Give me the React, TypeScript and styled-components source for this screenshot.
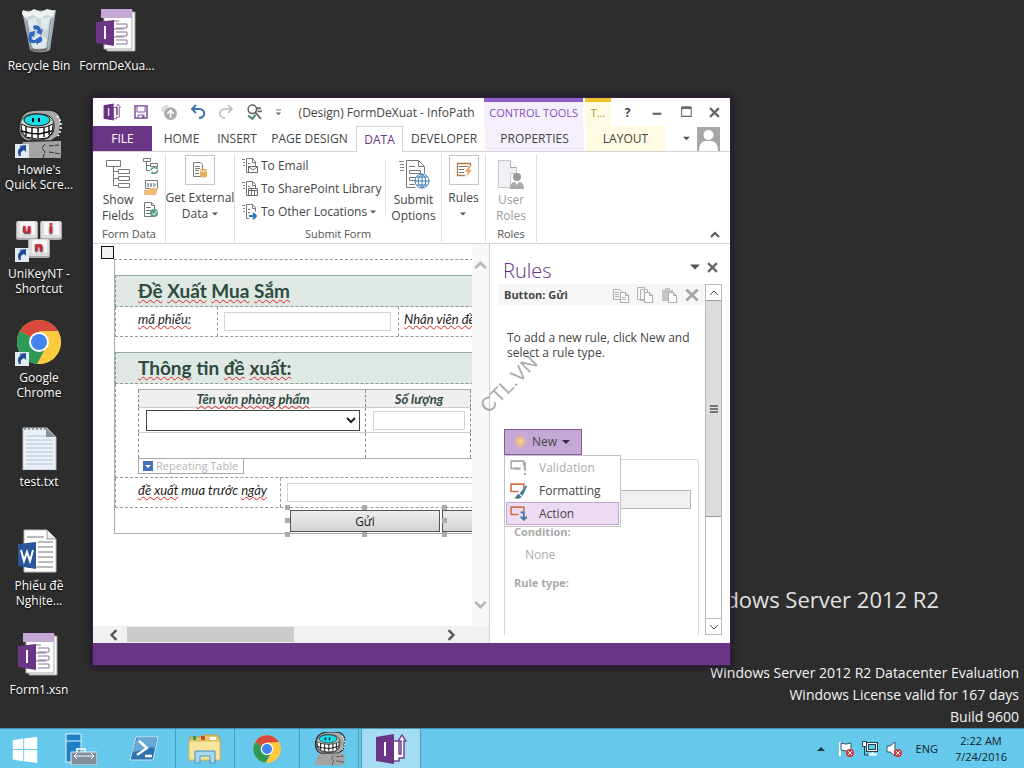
import type { ReactNode } from 'react';
import styled, { createGlobalStyle, css } from 'styled-components';

const purple = '#6a3585';

const GlobalStyle = createGlobalStyle`
  * {
    box-sizing: border-box;
  }
  body {
    margin: 0;
    background-color: #2d2d2d;
    font-family: 'Open Sans', 'Noto Sans', sans-serif;
    font-size: 12px;
    color: #444;
  }
  button, input, select {
    font: inherit;
    color: inherit;
    margin: 0;
    padding: 0;
    border-radius: 0;
  }
  button {
    background: none;
    border: none;
  }
  h1, h2, p {
    margin: 0;
    font-weight: normal;
  }
  svg {
    display: block;
    flex: none;
  }
`;

const Screen = styled.div`
  display: flex;
  flex-direction: column;
  height: 100vh;
  overflow: hidden;
`;

const Desktop = styled.main`
  position: relative;
  flex: 1;
  min-height: 0;
  display: flex;
  justify-content: space-between;
`;

const Shortcuts = styled.div`
  display: grid;
  grid-auto-flow: column;
  grid-template-rows: repeat(7, 104px);
  grid-auto-columns: 78px;
  padding-top: 6px;
`;

const ShortcutButton = styled.button`
  display: flex;
  flex-direction: column;
  align-items: center;
  justify-content: flex-start;
  color: #fff;
  font-size: 12px;
  line-height: 15px;
  text-shadow: 0 1px 2px #000;
  span {
    margin-top: 4px;
    white-space: pre;
  }
`;

const SystemInfo = styled.div`
  align-self: flex-end;
  padding-right: 5px;
  color: #f4f4f4;
  font-size: 14px;
  line-height: 22px;
  text-align: right;
  white-space: nowrap;
`;

const Brand = styled.p`
  padding-right: 80px;
  margin-bottom: 48px;
  font-size: 22px;
  line-height: 30px;
  color: #e2e2e2;
`;

/* ---------- window frame ---------- */

const Window = styled.section`
  position: absolute;
  inset: 97px 293px 62px 92px;
  display: flex;
  flex-direction: column;
  background-color: #fff;
  border: 1px solid #35203f;
  box-shadow: 0 0 6px 2px rgba(30, 12, 40, 0.6);
`;

const TitleBar = styled.header`
  display: flex;
  flex: none;
  height: 28px;
`;

const QuickAccess = styled.div`
  display: flex;
  align-items: center;
  gap: 12px;
  width: 206px;
  padding-left: 10px;
`;

const IconButton = styled.button`
  display: flex;
  align-items: center;
  justify-content: center;
`;

const Title = styled.h1`
  width: 186px;
  font-size: 12px;
  line-height: 30px;
  white-space: nowrap;
`;

const contextual = {
  control: { bar: '#8f5fc8', back: '#f4effb', text: '#8650bd' },
  table: { bar: '#eec32f', back: '#fffbe2', text: '#a98f3c' },
};

const ToolsLabel = styled.div<{ $kind: 'control' | 'table'; $width: number }>`
  width: ${props => props.$width}px;
  margin-right: 2px;
  border-top: 4px solid ${props => contextual[props.$kind].bar};
  background-color: ${props => contextual[props.$kind].back};
  color: ${props => contextual[props.$kind].text};
  font-size: 11px;
  line-height: 22px;
  text-align: center;
  white-space: nowrap;
`;

const WindowButtons = styled.div`
  flex: 1;
  display: flex;
  align-items: center;
  justify-content: flex-end;
  padding-right: 1px;
  > button {
    width: 29px;
  }
`;

const TabRow = styled.nav`
  display: flex;
  flex: none;
  height: 26px;
  border-bottom: 1px solid #d4d4d4;
`;

const Tab = styled.button<{ $width: number; $look?: 'file' | 'active' | 'control' | 'table' }>`
  width: ${props => props.$width}px;
  height: 25px;
  font-size: 12px;
  line-height: 24px;
  white-space: nowrap;
  ${props => props.$look === 'file' && css`
    background-color: ${purple};
    color: #fff;
  `}
  ${props => props.$look === 'active' && css`
    height: 26px;
    border: 1px solid #d4d4d4;
    border-bottom: none;
    background-color: #fff;
    color: ${purple};
  `}
  ${props => (props.$look === 'control' || props.$look === 'table') && css`
    margin-right: 2px;
    background-color: ${contextual[props.$look].back};
  `}
`;

const Account = styled.div`
  flex: 1;
  display: flex;
  align-items: center;
  justify-content: flex-end;
  gap: 7px;
  padding-right: 10px;
`;

/* ---------- ribbon ---------- */

const Ribbon = styled.div`
  display: flex;
  flex: none;
  height: 92px;
  padding-top: 2px;
  border-bottom: 1px solid #d4d4d4;
`;

const RibbonGroup = styled.div<{ $width: number }>`
  display: flex;
  flex-direction: column;
  width: ${props => props.$width}px;
  height: 88px;
  border-right: 1px solid #e1e1e1;
`;

const GroupBody = styled.div`
  display: flex;
  justify-content: center;
  height: 73px;
`;

const GroupName = styled.div`
  font-size: 11px;
  line-height: 16px;
  text-align: center;
  color: #555;
`;

const BigButton = styled.button<{ $framed?: boolean }>`
  display: flex;
  flex: 1;
  min-width: 0;
  flex-direction: column;
  align-items: center;
  padding-top: ${props => props.$framed ? 0 : 5}px;
  line-height: 16px;
  font-size: 12px;
  white-space: pre;
  &:disabled {
    color: #9d9d9d;
  }
  > span {
    margin-top: ${props => props.$framed ? 5 : 3}px;
    display: flex;
    flex-direction: column;
    align-items: center;
  }
`;

const IconFrame = styled.span`
  display: flex;
  align-items: center;
  justify-content: center;
  width: 30px;
  height: 30px;
  border: 1px solid #c6c6c6;
  && {
    margin-top: 1px;
    flex-direction: row;
  }
`;

const CaretLine = styled.span`
  display: flex;
  align-items: center;
  gap: 1px;
  min-height: 16px;
`;

const SmallColumn = styled.div`
  display: flex;
  flex-direction: column;
  gap: 6px;
  padding: 4px 6px 0 0;
`;

const SubmitList = styled.div`
  display: flex;
  flex: none;
  flex-direction: column;
  width: 150px;
  height: 69px;
  padding-left: 7px;
`;

const SubmitItem = styled.button`
  display: flex;
  align-items: center;
  gap: 3px;
  height: 23px;
  white-space: nowrap;
`;

const InnerRule = styled.div`
  width: 1px;
  height: 56px;
  margin-top: 6px;
  background-color: #e1e1e1;
`;

const Collapse = styled.button`
  margin: auto 10px 3px auto;
`;

/* ---------- form canvas ---------- */

const Work = styled.div`
  flex: 1;
  min-height: 0;
  display: flex;
`;

const CanvasPane = styled.div`
  flex: 1;
  min-width: 0;
  display: grid;
  grid-template-columns: minmax(0, 1fr) 17px;
  grid-template-rows: minmax(0, 1fr) 17px;
  border-right: 1px solid #d0d0d0;
`;

const Canvas = styled.div`
  overflow: hidden;
  padding: 2px 0 0 8px;
`;

const SelectAll = styled.button`
  display: block;
  width: 13px;
  height: 13px;
  border: 1px solid #111;
  background-color: #f0f0f0;
`;

const FormPage = styled.div`
  width: 520px;
  margin-left: 13px;
  border-left: 1px solid #aaa;
  border-top: 1px dashed #999;
  border-bottom: 1px solid #aaa;
  font-family: Lato, 'Open Sans', sans-serif;
  color: #222;
`;

const Band = styled.h2`
  margin-top: 15px;
  height: 32px;
  padding-left: 22px;
  border: 1px dashed #8a9a92;
  border-top: 1px solid #93aaa0;
  background-color: #dfe8e3;
  color: #2e4a40;
  font-size: 19px;
  font-weight: bold;
  line-height: 30px;
  white-space: nowrap;
`;

const Misspelt = styled.span`
  text-decoration: underline wavy #d22 1px;
  text-decoration-skip-ink: none;
  text-underline-offset: 1px;
`;

const FieldRow = styled.div<{ $label: number }>`
  display: grid;
  grid-template-columns: ${props => props.$label}px 181px 1fr;
  height: 30px;
  border-left: 1px dashed #999;
  border-bottom: 1px dashed #999;
  font-size: 13px;
  font-style: italic;
  line-height: 15px;
  white-space: nowrap;
`;

const FieldCell = styled.div<{ $pad: number; $span?: boolean }>`
  padding: 5px 7px 0 ${props => props.$pad}px;
  border-right: 1px dashed #999;
  grid-column: ${props => props.$span ? 'span 2' : 'auto'};
`;

const TextField = styled.input`
  display: block;
  width: 100%;
  height: 19px;
  border: 1px solid #d4d4d4;
  background-color: #fff;
`;

const Repeating = styled.div`
  height: 94px;
  padding: 5px 0 0 22px;
  border-left: 1px dashed #999;
  border-bottom: 1px dashed #999;
`;

const RepeatingTable = styled.table`
  width: 333px;
  border-collapse: collapse;
  border-top: 1px solid #aaa;
  table-layout: fixed;
  th, td {
    padding: 0 5px 0 7px;
    border-left: 1px dashed #888;
    border-right: 1px dashed #888;
  }
  th {
    height: 18px;
    background-color: #efefef;
    color: #2e4a40;
    font-size: 13px;
    font-style: italic;
    line-height: 16px;
  }
  td {
    height: 25px;
    border-top: 1px solid #ccc;
  }
`;

const ItemSelect = styled.select`
  display: block;
  width: 100%;
  height: 21px;
  border: 1px solid #444;
  background-color: #fff;
`;

const TableTag = styled.div`
  border-top: 1px solid #aaa;
  span {
    display: flex;
    align-items: center;
    gap: 3px;
    width: 106px;
    height: 15px;
    padding-left: 4px;
    border: 1px solid #aaa;
    border-top: none;
    color: #b4b4b4;
    font-family: 'Open Sans', sans-serif;
    font-size: 11px;
    white-space: nowrap;
  }
`;

const ButtonRow = styled.div`
  display: flex;
  gap: 2px;
  padding: 2px 0 1px 175px;
`;

const FormButton = styled.button`
  width: 150px;
  height: 22px;
  border: 1px solid #555;
  background: linear-gradient(#eee, #d2d2d2);
  font-family: 'Open Sans', sans-serif;
  font-size: 12px;
`;

const Selection = styled.div`
  position: relative;
`;

const Handle = styled.i<{ $x: string; $y: string }>`
  position: absolute;
  left: ${props => props.$x};
  top: ${props => props.$y};
  width: 5px;
  height: 5px;
  margin: -3px;
  background-color: #aaa;
`;

const VScroll = styled.div`
  display: flex;
  flex-direction: column;
  align-items: center;
  justify-content: space-between;
  padding: 15px 0;
  background-color: #f8f8f8;
`;

const HScroll = styled.div`
  display: flex;
  align-items: center;
  height: 17px;
  padding: 0 15px 0 15px;
  background-color: #f0f0f0;
`;

const HTrack = styled.div`
  flex: 1;
  height: 15px;
  margin: 0 25px 0 7px;
`;

const HThumb = styled.div`
  width: 57%;
  height: 15px;
  background-color: #cbcbcb;
`;

const Corner = styled.div`
  background-color: #f0f0f0;
`;

/* ---------- rules pane ---------- */

const RulesPane = styled.aside`
  flex: none;
  width: 240px;
  display: flex;
  flex-direction: column;
  padding: 12px 8px 8px;
`;

const PaneTitle = styled.div`
  display: flex;
  gap: 7px;
  height: 28px;
  padding: 0 4px 0 5px;
  h2 {
    flex: 1;
    font-size: 20px;
    font-weight: 300;
    line-height: 29px;
    color: #65317f;
  }
  button {
    height: 22px;
  }
`;

const PaneBody = styled.div`
  flex: 1;
  min-height: 0;
  display: flex;
`;

const PaneContent = styled.div`
  flex: 1;
  display: flex;
  flex-direction: column;
`;

const Target = styled.div`
  display: flex;
  align-items: center;
  gap: 8px;
  height: 21px;
  padding: 0 6px 0 6px;
  background-color: #f6f6f6;
  strong {
    flex: 1;
    font-size: 11px;
  }
`;

const Hint = styled.p`
  height: 95px;
  margin: 25px 0 0 9px;
  font-size: 12px;
  line-height: 15px;
  white-space: pre;
`;

const NewRule = styled.div`
  position: relative;
  margin: 4px 0 0 6px;
`;

const NewButton = styled.button`
  display: flex;
  align-items: center;
  gap: 5px;
  width: 78px;
  height: 26px;
  padding: 0 0 1px 9px;
  border: 1px solid #825b9b;
  background-color: #c5a8d6;
`;

const Menu = styled.div`
  position: absolute;
  left: 0;
  top: 26px;
  width: 117px;
  padding: 0 1px 1px;
  border: 1px solid #c2c2c2;
  background-color: #fff;
`;

const MenuItem = styled.button`
  display: flex;
  align-items: center;
  gap: 12px;
  width: 100%;
  height: 23px;
  padding-left: 3px;
  border: 1px solid transparent;
  &:disabled {
    color: #aaa;
  }
  &:last-child {
    border-color: #c3a3d4;
    background-color: #ebdcf4;
  }
`;

const RuleDetails = styled.div`
  flex: 1;
  margin: 4px 6px 0 6px;
  padding: 30px 7px 0 9px;
  border: 1px solid #d8d8d8;
  border-bottom: none;
  border-radius: 4px 4px 0 0;
  color: #aaa;
  font-size: 12px;
  line-height: 16px;
  input {
    display: block;
    width: 100%;
    height: 19px;
    border: 1px solid #b8b8b8;
    background-color: #f0f0f0;
  }
`;

const DetailLabel = styled.p<{ $top: number }>`
  margin-top: ${props => props.$top}px;
  font-size: 11px;
  font-weight: bold;
`;

const DetailValue = styled.p`
  margin: 7px 0 0 11px;
`;

const PaneScroll = styled.div`
  display: flex;
  flex-direction: column;
  width: 17px;
  border: 1px solid #bbb;
`;

const ScrollArrow = styled.button`
  display: flex;
  align-items: center;
  justify-content: center;
  height: 16px;
  border-bottom: 1px solid #999;
  &:last-child {
    margin-top: auto;
    border-top: 1px solid #bbb;
    border-bottom: none;
  }
`;

const ScrollThumb = styled.div`
  display: flex;
  align-items: center;
  justify-content: center;
  height: 62%;
  border-bottom: 1px solid #999;
  background-color: #dcdcdc;
`;

const StatusBar = styled.footer`
  flex: none;
  height: 22px;
  background-color: ${purple};
`;

const Watermark = styled.div`
  position: absolute;
  left: 473px;
  top: 372px;
  font-family: 'Liberation Sans', sans-serif;
  font-size: 20px;
  line-height: 24px;
  color: rgba(110, 110, 110, 0.6);
  transform: rotate(-45deg);
  pointer-events: none;
`;

/* ---------- taskbar ---------- */

const Taskbar = styled.footer`
  flex: none;
  display: flex;
  height: 40px;
  border-top: 1px solid #4792ae;
  background-color: #66c8ea;
`;

const TaskButton = styled.button<{ $width: number; $state?: 'open' | 'active' }>`
  display: flex;
  align-items: center;
  justify-content: center;
  width: ${props => props.$width}px;
  ${props => props.$state && css`
    border-left: 1px solid #4a9dba;
    border-right: 1px solid #4a9dba;
    margin-right: -1px;
  `}
  ${props => props.$state === 'active' && css`
    margin-left: 3px;
    background-color: #a3dcf3;
  `}
`;

const Tray = styled.div`
  display: flex;
  align-items: center;
  gap: 8px;
  margin-left: auto;
  padding-right: 8px;
  color: #10242c;
  font-size: 11px;
  > span {
    margin-left: 6px;
  }
  > svg:first-child {
    margin-right: 5px;
  }
`;

const Clock = styled.time`
  width: 70px;
  font-size: 11px;
  line-height: 16px;
  text-align: center;
`;

/* ---------- drawings ---------- */

type IconProps = { size: number; children: ReactNode; box?: number; height?: number };

function Icon({ size, children, box = 16, height }: IconProps) {
  return (
    <svg width={size} height={height ?? size} viewBox={`0 0 ${box} ${height ? (box * height) / size : box}`} fill="none" aria-hidden="true">
      {children}
    </svg>
  );
}

const Caret = ({ color = '#555', size = 7 }: { color?: string; size?: number }) => (
  <Icon size={size} box={8}><path d="M0 2h8L4 6z" fill={color} /></Icon>
);

const Chevron = ({ turn, color = '#555', size = 10, weight = 2 }: { turn: number; color?: string; size?: number; weight?: number }) => (
  <Icon size={size} box={10}>
    <path d="M1 7l4-4 4 4" stroke={color} strokeWidth={weight} transform={`rotate(${turn} 5 5)`} />
  </Icon>
);

const Cross = ({ color = '#666', size = 11 }: { color?: string; size?: number }) => (
  <Icon size={size} box={10}><path d="M1 1l8 8M9 1L1 9" stroke={color} strokeWidth="2" /></Icon>
);

const ShortcutArrow = () => (
  <g>
    <path d="M0 34h14v14H0z" fill="#dfeaf2" />
    <path d="M4 46c-2-4-1-7 2-9l-2-1 7-1v7l-2-2c-3 1-4 3-3 6z" fill="#1d4f96" />
  </g>
);

const RecycleIcon = () => (
  <Icon size={48} box={48}>
    <path d="M7 5l34-1-6 40c-5 3-15 3-20 0z" fill="#9aaab2" />
    <path d="M10 8l28-1-5 34c-4 2-12 2-16 0z" fill="#c7d3d9" />
    <path d="M8 4l6 2 5-3 7 3 6-3 8 2-2 6-7-2-6 4-7-4-8 3-3-4z" fill="#eef2f3" />
    <path d="M12 15l8-4 4 9-7 8zM26 13l9-2-3 14-6-4zM16 34l8-6 8 5-2 9-12 1z" fill="#e4eaec" opacity=".9" />
    <path d="M12 14l4 28M36 13l-4 29" stroke="#7f9099" />
    <path d="M18 20c4-2 7 0 8 4l2-1-2 6-5-3 2-1c-1-2-2-2-4-1zM15 26l5-1-1 6-2-1c-1 3 0 4 3 4v3c-6 1-8-3-6-8zM21 33l5-3 1 2c1 3-1 5-4 5v2l-4-4 3-3z" fill="#2f68bf" />
    <path d="M16 43c5 2 11 2 16 0" stroke="#6e6763" strokeWidth="2" />
  </Icon>
);

const InfoPathFile = () => (
  <Icon size={48} box={48}>
    <path d="M14 6h28v39H14z" fill="#fff" stroke="#999" />
    <path d="M11 4h28v39H11z" fill="#fff" stroke="#aaa" />
    <path d="M8 3h31v9H8z" fill="#c6a8d7" />
    <path d="M23 18h11v4H23M23 26h11v4H23M23 34h11v4H23M21 15h5M21 23h10M21 31h10" stroke="#89709a" />
    <path d="M3 16l18-2v26L3 37z" fill={purple} />
    <path d="M11 20h2v13h-2z" fill="#fff" />
  </Icon>
);

const RobotArt = () => (
  <g>
    <path d="M5 10C8 2 14 0 23 0h10c8 0 14 5 13 13l-2 13-8 5H12C3 28 2 18 5 10z" fill="#aaa" stroke="#222" strokeWidth="1.5" />
    <path d="M42 6c5 5 5 13 1 20" stroke="#eee" strokeWidth="2" strokeDasharray="2 2" />
    <path d="M5 13C8 5 17 3 24 4c11 0 16 5 15 14-1 8-6 12-16 12C10 30 3 24 5 13z" fill="#ccc" stroke="#222" />
    <ellipse cx="22" cy="10" rx="13" ry="6" fill="#18dbe8" stroke="#222" />
    <path d="M18 8v4M24 8v4" stroke="#111" strokeWidth="2" />
    <path d="M6 14l7 3 9 1 9-1 7-3-1 9-5 5-10 1-11-2-4-5z" fill="#fff" stroke="#111" />
    <path d="M6 21l8 2 10 1 13-3M11 16v10M17 18v10M23 18v10M29 17v10M34 16v9" stroke="#111" strokeWidth="1.4" />
    <path d="M8 32l38-1v17H2z" fill="#a3a3a3" />
    <path d="M30 34l-3 4 3 4-2 6M34 36l10-1M34 42l12 2" stroke="#333" strokeDasharray="5 1" />
  </g>
);

const RobotIcon = ({ size, shortcut }: { size: number; shortcut?: boolean }) => (
  <Icon size={size} box={48}>
    <RobotArt />
    {shortcut && <ShortcutArrow />}
  </Icon>
);

const KeyCaps = () => (
  <Icon size={48} box={48}>
    {[[1, 7, 'u'], [25, 7, 'i'], [13, 25, 'n']].map(([x, y, letter]) => (
      <g key={letter} transform={`translate(${x} ${y})`}>
        <rect width="22" height="19" rx="2" fill="#aaa" />
        <rect x="1" width="20" height="17" rx="2" fill="#ddd" />
        <rect x="4" y="1" width="15" height="13" rx="2" fill="#f7f7f7" />
        <text x="11" y="12" fontSize="13" fontWeight="bold" fontFamily="DejaVu Sans, sans-serif" fill="#dc2335" textAnchor="middle">{letter}</text>
      </g>
    ))}
    <ShortcutArrow />
  </Icon>
);

const ChromeArt = () => (
  <g>
    <circle cx="24" cy="24" r="22" fill="#fcca3f" />
    <path d="M24 24L5 13a22 22 0 0119-11c8 0 15 4 19 11z" fill="#d94a3d" />
    <path d="M24 24L5 13a22 22 0 0017 33l9-17z" fill="#2d9b57" />
    <path d="M24 13h19a22 22 0 01-21 33l11-17z" fill="#fccb40" />
    <circle cx="24" cy="24" r="10" fill="#fff" />
    <circle cx="24" cy="24" r="8" fill="#4384ee" />
  </g>
);

const ChromeIcon = ({ size, shortcut }: { size: number; shortcut?: boolean }) => (
  <Icon size={size} box={48}>
    <ChromeArt />
    {shortcut && <ShortcutArrow />}
  </Icon>
);

const TextFileIcon = () => (
  <Icon size={48} box={48}>
    <path d="M8 6h24l9 9v33H8z" fill="#e9f0f6" stroke="#b7c0c8" />
    <path d="M11 14h20M11 18h27M11 22h27M11 26h27M11 30h27M11 34h27M11 38h27M11 42h27" stroke="#b2c4d6" />
    <path d="M31 6v9h10z" fill="#85919c" />
    <path d="M9 7h22" stroke="#999" strokeWidth="2" strokeDasharray="2 2" />
  </Icon>
);

const WordIcon = () => (
  <Icon size={48} box={48}>
    <path d="M9 4h23l9 9v33H9z" fill="#fff" stroke="#bbb" />
    <path d="M32 4v9h9" fill="#eee" stroke="#999" />
    <path d="M12 11h17M23 16h15M23 21h15M23 26h15M23 31h15M23 36h15M12 41h26" stroke="#777" />
    <path d="M3 18l18-2v27L3 40z" fill="#2a5699" />
    <path d="M6 24l3 11 3-9 3 9 3-11" stroke="#fff" strokeWidth="2" />
  </Icon>
);

const InfoPathLogo = ({ size }: { size: number }) => (
  <Icon size={size} box={32}>
    <path d="M18 8h6v13h2V8h-3l4-6 4 6h-2v17h-5v3h-6z" fill="#fff" stroke="#774493" strokeWidth="1.5" />
    <path d="M1 4l18-3v30L1 28z" fill={purple} />
    <path d="M9 9h2v14H9z" fill="#fff" />
  </Icon>
);

const SaveIcon = () => (
  <Icon size={16}>
    <path d="M2 2h12v12H2z" stroke="#8054a0" strokeWidth="1.6" />
    <path d="M4 2h8v6H4zM5 11h6v3H5z" fill="#fff" stroke="#8054a0" />
    <path d="M9 12h2v2H9z" fill="#8054a0" />
  </Icon>
);

const PublishIcon = () => (
  <Icon size={17}>
    <path d="M1 7l1-4 4-2M3 8V5l4-3" stroke="#c6c6c6" />
    <circle cx="9" cy="9" r="6" fill="#aaa" />
    <path d="M9 13V7M6 9l3-3 3 3" stroke="#fff" strokeWidth="1.5" />
  </Icon>
);

const UndoIcon = () => (
  <Icon size={16}>
    <path d="M6 1L2 5l4 4M2 5h7c4 0 6 3 5 6-1 2-3 3-5 3" stroke="#3d76b0" strokeWidth="2" />
  </Icon>
);

const RedoIcon = () => (
  <Icon size={16}>
    <path d="M10 1l4 4-4 4M14 5H7c-4 0-6 3-5 6 1 2 3 3 5 3" stroke="#bbb" strokeWidth="1.6" />
  </Icon>
);

const PreviewIcon = () => (
  <Icon size={17}>
    <circle cx="6" cy="5" r="4" stroke="#666" strokeWidth="1.5" />
    <path d="M9 8l5 6M10 4h4M11 7h4" stroke="#666" strokeWidth="1.7" />
    <path d="M2 11l4 3 3-4" stroke="#4c8b73" strokeWidth="2" />
  </Icon>
);

const FieldsIcon = () => (
  <Icon size={26} height={30} box={26}>
    <path d="M1.5 1.5h14v6h-14zM13.5 10.5h11v4h-11zM13.5 17.5h11v4h-11zM13.5 24.5h11v4h-11zM8.5 7.5v19h5M8.5 12.5h5M8.5 19.5h5" stroke="#777" />
  </Icon>
);

const RefreshFieldsIcon = () => (
  <Icon size={16}>
    <path d="M.5.5h7v3h-7zM7.5 5.5h7v3h-7zM3.5 3.5v9h4M3.5 7.5h4" stroke="#777" />
    <path d="M8 12c1-3 5-3 6-1V9M15 12c-1 4-5 4-6 2v2" stroke="#4c9a7c" strokeWidth="1.4" />
  </Icon>
);

const ResourceIcon = () => (
  <Icon size={16}>
    <path d="M2.5.5h12v8h-12z" stroke="#777" />
    <path d="M5 3v4M8 3v4M11 3v4M5 5h1M8 5h1M12 5h1" stroke="#567" />
    <path d="M1 10h4l1-2h9l-2 7H1z" fill="#eebb78" />
  </Icon>
);

const CheckDocIcon = () => (
  <Icon size={16}>
    <path d="M1.5.5h7l3 3v11h-10zM8.5.5v3h3M3 5.5h5M3 8.5h5M3 11.5h4" stroke="#777" />
    <circle cx="11" cy="11" r="4" fill="#5aa083" />
    <path d="M9 11l2 2 3-4" stroke="#fff" />
  </Icon>
);

const ExternalIcon = () => (
  <Icon size={16}>
    <path d="M1.5.5h7l2 2v12h-9zM3 4.5h5M3 6.5h5M3 8.5h4M3 11.5h4" stroke="#777" />
    <path d="M8 7h7v7c-2 2-5 2-7 0z" fill="#eaae59" />
    <path d="M8 8c2 2 5 2 7 0" stroke="#fff" />
  </Icon>
);

const SubmitIcon = ({ kind }: { kind: 'email' | 'library' | 'other' }) => (
  <Icon size={16}>
    <path d="M0 1.5h3M1 4.5h2M1 7.5h2" stroke="#777" />
    <path d="M7 14.5H4.500V.5h6l3 3v4M10.500.5v4h3M6 5.500h2M6 8.500h2" stroke="#777" />
    {kind === 'email' && <path d="M6.500 8.500h9v6h-9zM7 9l4 3 4-3" stroke="#666" fill="#fff" />}
    {kind === 'library' && <path d="M6.500 7.500h9v7h-9zM6.500 9.500h9M9.500 7.500v7M12.500 9.500v5" stroke="#666" fill="#fff" />}
    {kind === 'other' && <path d="M7 12h7M11 9l3 3-3 3" stroke="#3474b4" strokeWidth="2" />}
  </Icon>
);

const SubmitOptionsIcon = () => (
  <Icon size={32} height={30} box={32}>
    <path d="M1 2.500h5M2 5.500h4M2 8.500h4M2 11.500h4" stroke="#888" />
    <path d="M8.500 28.500V1.500h12l6 6v7M20.500 1.500v6h6M11 7.500h6M11.500 11.500h11v3h-11zM18 18.500h-6.500v3H17M11.500 25.500h5M8.500 28.500h9" stroke="#777" />
    <circle cx="24" cy="22" r="7" fill="#fff" stroke="#3c78b4" />
    <path d="M17 22h14M24 15v14M19 18h10M19 26h10M24 15c-5 4-5 10 0 14M24 15c5 4 5 10 0 14" stroke="#3c78b4" />
  </Icon>
);

const RulesIcon = () => (
  <Icon size={16}>
    <path d="M14.500 4V1.500h-13v12H9" stroke="#b5764a" strokeWidth="1.3" />
    <path d="M3 4.500h9M3 7.500h5M3 10.500h5" stroke="#777" />
    <path d="M13 4l-4 6h3l-2 5 6-7h-3l2-4z" fill="#eaa461" />
  </Icon>
);

const UserRolesIcon = () => (
  <Icon size={28} height={30} box={28}>
    <path d="M1.500 28.500v-27h12l6 7v6h-6v14z" fill="#f2f0f4" stroke="#c8c8c8" />
    <path d="M13.500 1.500v7h6" stroke="#aaa" fill="#fff" />
    <circle cx="20" cy="18" r="4" fill="#999" />
    <path d="M13 30c0-5 2-7 5-7l2 3 2-3c3 0 5 2 5 7z" fill="#aaa" />
  </Icon>
);

const Avatar = () => (
  <Icon size={23} height={24} box={23}>
    <path d="M0 0h23v24H0z" fill="#a6a6a6" />
    <circle cx="11.5" cy="8" r="5" fill="#fff" />
    <path d="M2 24c0-7 3-10 7-10h5c4 0 7 3 7 10z" fill="#fff" />
  </Icon>
);

const CopyIcon = ({ kind }: { kind: 'copy' | 'all' | 'paste' }) => (
  <Icon size={16}>
    {kind === 'paste' && <path d="M1 3h11v11H1zM4 1h5v3H4z" fill="#c4c4c4" />}
    {kind === 'copy' && <path d="M.5 2.500h6l2 2v8h-8zM2 5.500h4M2 7.500h4M2 9.500h4" stroke="#b2b2b2" />}
    {kind === 'all' && <path d="M.5.5h7v12h-7zM3.500 2.500h7v11h-7z" stroke="#b2b2b2" />}
    <path d="M7.500 5.500h5l3 3v7h-8zM12.500 5.500v3h3" fill="#fff" stroke="#aaa" />
    {kind === 'copy' && <path d="M9 10.500h4M9 12.500h4" stroke="#b2b2b2" />}
  </Icon>
);

const NewStar = () => (
  <Icon size={13}>
    <path d="M8 1v14M1 8h14M3 3l10 10M13 3L3 13" stroke="#e9b98b" strokeWidth="3" />
    <circle cx="8" cy="8" r="3" fill="#f5cf93" />
  </Icon>
);

const RuleIcon = ({ kind }: { kind: 'validation' | 'formatting' | 'action' }) => (
  <Icon size={17}>
    <path d="M8 9H1V2h12v4" stroke={kind === 'validation' ? '#aaa' : '#cf7243'} strokeWidth="1.5" />
    {kind === 'validation' && <path d="M14 3v8M14 13v2M4 9h6" stroke="#aaa" strokeWidth="2" />}
    {kind === 'formatting' && <path d="M15 3l-6 8 3 2 4-9zM8 11l3 3c-2 2-4 2-7 1 2-1 2-3 4-4z" fill="#4a7690" />}
    {kind === 'action' && <path d="M10 7h3v7M10 11l3 3 3-3" stroke="#3e7292" strokeWidth="1.6" />}
  </Icon>
);

const TagIcon = () => (
  <Icon size={10} box={10}>
    <path d="M0 0h10v10H0z" fill="#4770b8" />
    <path d="M2 4h6L5 7z" fill="#fff" />
  </Icon>
);

const WindowsLogo = () => (
  <Icon size={28}>
    <path d="M1 3l6-1v6H1zM7.500 2l7.500-1v7H7.500zM1 8.500h6V15l-6-1zM7.500 8.500H15V16l-7.500-1z" fill="#fff" />
  </Icon>
);

const ServerManager = () => (
  <Icon size={32} box={32}>
    <path d="M1 1h15v28H1z" fill="#1d80c7" stroke="#e0f4fb" />
    <path d="M1 8h15" stroke="#e0f4fb" />
    <path d="M12 19v-3h8v3" stroke="#e6eef1" strokeWidth="2" />
    <path d="M6 19h26v13H6z" fill="#7f909a" stroke="#e6eef1" />
    <path d="M9 23h20M12 20l-3 3 3 3M26 20l3 3-3 3" stroke="#fff" />
  </Icon>
);

const PowerShell = () => (
  <Icon size={30} box={30}>
    <path d="M7 3h22l-5 23H1z" fill="#2b73b0" stroke="#cde6f3" />
    <path d="M8 4h20l-2 10C19 11 11 18 3 18z" fill="#69a8d4" />
    <path d="M10 7l8 7-10 7M16 22h7" stroke="#fff" strokeWidth="2.5" />
  </Icon>
);

const Explorer = () => (
  <Icon size={34} box={34}>
    <path d="M2 5h11l2-2h14l3 4v21H2z" fill="#e4c766" stroke="#b99a45" />
    <path d="M5 4h3v4H5z" fill="#40984f" />
    <path d="M13 4h4v4h-4z" fill="#c34b37" />
    <path d="M22 5h6v3h-6z" fill="#fff" />
    <path d="M1 9h31v19H1z" fill="#f8e59c" stroke="#d7b95f" />
    <path d="M7 31V19h20v12h-5v-7H12v7z" fill="#a9d9f2" stroke="#3e91bf" />
  </Icon>
);

const RedBadge = () => (
  <g>
    <circle cx="12" cy="12" r="4" fill="#d63a40" />
    <path d="M10 10l4 4M14 10l-4 4" stroke="#fff" />
  </g>
);

const FlagTray = () => (
  <Icon size={16}>
    <path d="M2 1v14" stroke="#fff" strokeWidth="2" />
    <path d="M3 2l5 1 5-1v7l-5 1-5-1z" fill="#f8fbfd" stroke="#345866" />
    <RedBadge />
  </Icon>
);

const NetTray = () => (
  <Icon size={16}>
    <path d="M5.500 2.500h9v7h-9z" fill="#66c8ea" stroke="#24404b" strokeWidth="3" />
    <path d="M5.500 2.500h9v7h-9z" stroke="#fff" />
    <path d="M.5.5h4v5h-4z" fill="#fff" stroke="#24404b" />
    <path d="M2.500 6v8h4" stroke="#24404b" />
    <path d="M7 13.500h8M10.500 11v2" stroke="#fff" strokeWidth="2" />
  </Icon>
);

const SoundTray = () => (
  <Icon size={16}>
    <path d="M1 5h3l5-4v14l-5-4H1z" fill="#fff" stroke="#345866" />
    <RedBadge />
  </Icon>
);

/* ---------- parts ---------- */

const shortcuts = [
  { name: 'Recycle Bin', icon: <RecycleIcon /> },
  { name: "Howie's\nQuick Scre...", icon: <RobotIcon size={48} shortcut /> },
  { name: 'UniKeyNT -\nShortcut', icon: <KeyCaps /> },
  { name: 'Google\nChrome', icon: <ChromeIcon size={48} shortcut /> },
  { name: 'test.txt', icon: <TextFileIcon /> },
  { name: 'Phiếu đề\nNghịte...', icon: <WordIcon /> },
  { name: 'Form1.xsn', icon: <InfoPathFile /> },
  { name: 'FormDeXua...', icon: <InfoPathFile /> },
];

function WindowHeader() {
  return (
    <>
      <TitleBar>
        <QuickAccess>
          <InfoPathLogo size={18} />
          <IconButton aria-label="Save"><SaveIcon /></IconButton>
          <IconButton aria-label="Publish"><PublishIcon /></IconButton>
          <IconButton aria-label="Undo"><UndoIcon /></IconButton>
          <IconButton aria-label="Redo"><RedoIcon /></IconButton>
          <IconButton aria-label="Preview"><PreviewIcon /></IconButton>
          <IconButton aria-label="Customize">
            <Icon size={7} box={8}><path d="M1 1h6" stroke="#666" /><path d="M1 4h6L4 7z" fill="#666" /></Icon>
          </IconButton>
        </QuickAccess>
        <Title>(Design) FormDeXuat - InfoPath</Title>
        <ToolsLabel $kind="control" $width={99}>CONTROL TOOLS</ToolsLabel>
        <ToolsLabel $kind="table" $width={26}>T...</ToolsLabel>
        <WindowButtons>
          <IconButton aria-label="Help"><b>?</b></IconButton>
          <IconButton aria-label="Minimize"><Icon size={14}><path d="M3 10h10" stroke="#666" strokeWidth="2.5" /></Icon></IconButton>
          <IconButton aria-label="Maximize"><Icon size={14}><path d="M3 3h11v10H3z" stroke="#666" strokeWidth="1.2" /><path d="M3 3h11" stroke="#666" strokeWidth="3" /></Icon></IconButton>
          <IconButton aria-label="Close"><Cross /></IconButton>
        </WindowButtons>
      </TitleBar>
      <TabRow>
        <Tab $width={59} $look="file">FILE</Tab>
        <Tab $width={59}>HOME</Tab>
        <Tab $width={52}>INSERT</Tab>
        <Tab $width={93}>PAGE DESIGN</Tab>
        <Tab $width={47} $look="active">DATA</Tab>
        <Tab $width={82}>DEVELOPER</Tab>
        <Tab $width={99} $look="control">PROPERTIES</Tab>
        <Tab $width={79} $look="table">LAYOUT</Tab>
        <Account>
          <Caret />
          <Avatar />
        </Account>
      </TabRow>
    </>
  );
}

function DataRibbon() {
  return (
    <Ribbon>
      <RibbonGroup $width={73}>
        <GroupBody>
          <BigButton><FieldsIcon /><span>{'Show\nFields'}</span></BigButton>
          <SmallColumn>
            <IconButton aria-label="Refresh Fields"><RefreshFieldsIcon /></IconButton>
            <IconButton aria-label="Resource Files"><ResourceIcon /></IconButton>
            <IconButton aria-label="Default Values"><CheckDocIcon /></IconButton>
          </SmallColumn>
        </GroupBody>
        <GroupName>Form Data</GroupName>
      </RibbonGroup>
      <RibbonGroup $width={69}>
        <GroupBody>
          <BigButton $framed>
            <IconFrame><ExternalIcon /></IconFrame>
            <span>Get External<CaretLine>Data <Caret size={6} /></CaretLine></span>
          </BigButton>
        </GroupBody>
      </RibbonGroup>
      <RibbonGroup $width={207}>
        <GroupBody>
          <SubmitList>
            <SubmitItem><SubmitIcon kind="email" />To Email</SubmitItem>
            <SubmitItem><SubmitIcon kind="library" />To SharePoint Library</SubmitItem>
            <SubmitItem><SubmitIcon kind="other" />To Other Locations<Caret size={6} /></SubmitItem>
          </SubmitList>
          <InnerRule />
          <BigButton><SubmitOptionsIcon /><span>{'Submit\nOptions'}</span></BigButton>
        </GroupBody>
        <GroupName>Submit Form</GroupName>
      </RibbonGroup>
      <RibbonGroup $width={44}>
        <GroupBody>
          <BigButton $framed>
            <IconFrame><RulesIcon /></IconFrame>
            <span>Rules<CaretLine><Caret size={6} /></CaretLine></span>
          </BigButton>
        </GroupBody>
      </RibbonGroup>
      <RibbonGroup $width={51}>
        <GroupBody>
          <BigButton disabled><UserRolesIcon /><span>{'User\nRoles'}</span></BigButton>
        </GroupBody>
        <GroupName>Roles</GroupName>
      </RibbonGroup>
      <Collapse aria-label="Collapse the ribbon"><Chevron turn={0} /></Collapse>
    </Ribbon>
  );
}

function FormDesign() {
  return (
    <CanvasPane>
      <Canvas>
        <SelectAll aria-label="Select all" />
        <FormPage>
          <Band>
            <Misspelt>Đề</Misspelt> <Misspelt>Xuất</Misspelt> <Misspelt>Mua</Misspelt> <Misspelt>Sắm</Misspelt>
          </Band>
          <FieldRow $label={102}>
            <FieldCell $pad={22}><label htmlFor="code"><Misspelt>mã phiếu:</Misspelt></label></FieldCell>
            <FieldCell $pad={6}><TextField id="code" /></FieldCell>
            <FieldCell $pad={5}><Misspelt>Nhân viên đề</Misspelt></FieldCell>
          </FieldRow>
          <Band>
            <Misspelt>Thông</Misspelt> tin <Misspelt>đề</Misspelt> <Misspelt>xuất:</Misspelt>
          </Band>
          <Repeating>
            <RepeatingTable>
              <colgroup>
                <col />
                <col width="105" />
              </colgroup>
              <thead>
                <tr>
                  <th><Misspelt>Tên văn phòng phẩm</Misspelt></th>
                  <th>Số lượng</th>
                </tr>
              </thead>
              <tbody>
                <tr>
                  <td><ItemSelect aria-label="Tên văn phòng phẩm" /></td>
                  <td><TextField aria-label="Số lượng" /></td>
                </tr>
                <tr><td /><td /></tr>
              </tbody>
            </RepeatingTable>
            <TableTag><span><TagIcon />Repeating Table</span></TableTag>
          </Repeating>
          <FieldRow $label={165}>
            <FieldCell $pad={22}>
              <label htmlFor="date"><Misspelt>đề xuất</Misspelt> mua trước <Misspelt>ngày</Misspelt></label>
            </FieldCell>
            <FieldCell $pad={6} $span><TextField id="date" /></FieldCell>
          </FieldRow>
          <ButtonRow>
            <Selection>
              <FormButton>Gửi</FormButton>
              {['-2px', '50%', '103%'].map(x => ['-2px', '50%', '115%'].map(y => (
                x === '50%' && y === '50%' ? null : <Handle key={x + y} $x={x} $y={y} />
              )))}
            </Selection>
            <FormButton aria-label="Button" />
          </ButtonRow>
        </FormPage>
      </Canvas>
      <VScroll>
        <Chevron turn={0} color="#b5b5b5" size={13} />
        <Chevron turn={180} color="#b5b5b5" size={13} />
      </VScroll>
      <HScroll>
        <Chevron turn={-90} size={12} />
        <HTrack><HThumb /></HTrack>
        <Chevron turn={90} size={12} />
      </HScroll>
      <Corner />
    </CanvasPane>
  );
}

function Rules() {
  return (
    <RulesPane>
      <PaneTitle>
        <h2>Rules</h2>
        <IconButton aria-label="Pane options"><Caret size={10} /></IconButton>
        <IconButton aria-label="Close pane"><Cross /></IconButton>
      </PaneTitle>
      <PaneBody>
        <PaneContent>
          <Target>
            <strong>Button: Gửi</strong>
            <IconButton aria-label="Copy rule"><CopyIcon kind="copy" /></IconButton>
            <IconButton aria-label="Copy all rules"><CopyIcon kind="all" /></IconButton>
            <IconButton aria-label="Paste rule"><CopyIcon kind="paste" /></IconButton>
            <IconButton aria-label="Delete rule"><Cross color="#a6a6a6" size={14} /></IconButton>
          </Target>
          <Hint>{'To add a new rule, click New and\nselect a rule type.'}</Hint>
          <NewRule>
            <NewButton><NewStar />New <Caret size={8} color="#3d2a48" /></NewButton>
            <Menu>
              <MenuItem disabled><RuleIcon kind="validation" />Validation</MenuItem>
              <MenuItem><RuleIcon kind="formatting" />Formatting</MenuItem>
              <MenuItem><RuleIcon kind="action" />Action</MenuItem>
            </Menu>
          </NewRule>
          <RuleDetails>
            <input aria-label="Details for" disabled />
            <DetailLabel $top={15}>Condition:</DetailLabel>
            <DetailValue>None</DetailValue>
            <DetailLabel $top={12}>Rule type:</DetailLabel>
          </RuleDetails>
        </PaneContent>
        <PaneScroll>
          <ScrollArrow aria-label="Scroll up"><Chevron turn={0} weight={1} /></ScrollArrow>
          <ScrollThumb>
            <Icon size={8} box={8}><path d="M0 1h8M0 4h8M0 7h8" stroke="#555" strokeWidth="1.5" /></Icon>
          </ScrollThumb>
          <ScrollArrow aria-label="Scroll down"><Chevron turn={180} weight={1} /></ScrollArrow>
        </PaneScroll>
      </PaneBody>
    </RulesPane>
  );
}

function App() {
  return (
    <Screen>
      <GlobalStyle />
      <Desktop>
        <Shortcuts>
          {shortcuts.map(({ name, icon }) => (
            <ShortcutButton key={name}>
              {icon}
              <span>{name}</span>
            </ShortcutButton>
          ))}
        </Shortcuts>
        <SystemInfo>
          <Brand>Windows Server 2012 R2</Brand>
          <p>Windows Server 2012 R2 Datacenter Evaluation</p>
          <p>Windows License valid for 167 days</p>
          <p>Build 9600</p>
        </SystemInfo>
        <Window>
          <WindowHeader />
          <DataRibbon />
          <Work>
            <FormDesign />
            <Rules />
          </Work>
          <StatusBar />
        </Window>
        <Watermark>CTL.VN</Watermark>
      </Desktop>
      <Taskbar>
        <TaskButton $width={50} aria-label="Start"><WindowsLogo /></TaskButton>
        <TaskButton $width={62} aria-label="Server Manager"><ServerManager /></TaskButton>
        <TaskButton $width={63} aria-label="PowerShell"><PowerShell /></TaskButton>
        <TaskButton $width={60} $state="open" aria-label="File Explorer"><Explorer /></TaskButton>
        <TaskButton $width={66} $state="open" aria-label="Google Chrome"><ChromeIcon size={30} /></TaskButton>
        <TaskButton $width={60} $state="open" aria-label="Quick Screen Capture"><RobotIcon size={33} /></TaskButton>
        <TaskButton $width={60} $state="active" aria-label="InfoPath"><InfoPathLogo size={32} /></TaskButton>
        <Tray>
          <Icon size={8} box={8}><path d="M0 6h8L4 2z" fill="#1d3944" /></Icon>
          <FlagTray />
          <NetTray />
          <SoundTray />
          <span>ENG</span>
          <Clock>2:22 AM<br />7/24/2016</Clock>
        </Tray>
      </Taskbar>
    </Screen>
  );
}

export default App;
